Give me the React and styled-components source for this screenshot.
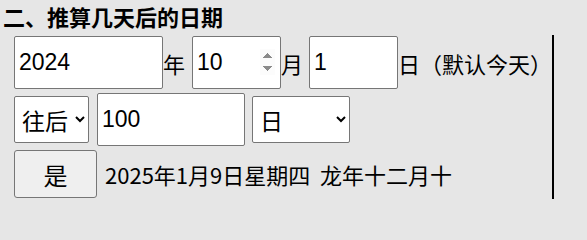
import React, { useState } from "react";
import styled, { createGlobalStyle } from "styled-components";

const GlobalStyle = createGlobalStyle`
  html, body {
    margin: 0;
    background: #e6e6e6;
  }
  body {
    font-family: "Noto Sans CJK SC", "Liberation Sans", sans-serif;
    color: #000;
  }
  input[type="number"]::-webkit-inner-spin-button {
    opacity: 1;
  }
`;

const Page = styled.div`
  padding: 5px 0 0 3px;
`;

const Title = styled.h3`
  margin: 0;
  font-size: 22px;
  line-height: 22px;
  font-weight: 700;
`;

const Form = styled.div`
  margin: 8px 0 0 11px;
  width: 540px;
  box-sizing: border-box;
  padding: 1px 0;
  border-right: 2px solid #000;
  display: flex;
  flex-direction: column;
  gap: 4px;
`;

const Row = styled.div`
  display: flex;
  align-items: center;
  white-space: nowrap;
  font-size: 22px;
`;

const Field = styled.input`
  box-sizing: border-box;
  width: ${(p) => p.$w}px;
  height: 53px;
  margin-right: ${(p) => p.$gap || 0}px;
  padding: 12px 5px 12px 4px;
  border: 1px solid #767676;
  border-radius: 2px;
  background: #fff;
  font-family: "Liberation Sans", Arial, sans-serif;
  font-size: 23px;
  color: #000;
  outline: none;
`;

const Unit = styled.span`
  margin-right: ${(p) => p.$gap || 0}px;
`;

const Picker = styled.select`
  box-sizing: border-box;
  width: ${(p) => p.$w}px;
  height: 47px;
  margin-right: ${(p) => p.$gap || 0}px;
  padding: 0 0 0 3px;
  border: 1px solid #767676;
  border-radius: 2px;
  background: #fff;
  font-family: "Noto Sans CJK SC", sans-serif;
  font-size: 23px;
  color: #000;
`;

const Button = styled.button`
  box-sizing: border-box;
  width: 83px;
  height: 48px;
  margin-right: 8px;
  border: 1px solid #767676;
  border-radius: 3px;
  background: #efefef;
  font-family: "Noto Sans CJK SC", sans-serif;
  font-size: 24px;
  color: #000;
`;

export default function App() {
  const [year, setYear] = useState("2024");
  const [month, setMonth] = useState("10");
  const [day, setDay] = useState("1");
  const [count, setCount] = useState("100");

  return (
    <Page>
      <GlobalStyle />
      <Title>二、推算几天后的日期</Title>
      <Form>
        <Row>
          <Field $w={149} value={year} onChange={(e) => setYear(e.target.value)} />
          <Unit $gap={7}>年</Unit>
          <Field
            type="number"
            $w={89}
            value={month}
            onChange={(e) => setMonth(e.target.value)}
          />
          <Unit $gap={6}>月</Unit>
          <Field $w={89} value={day} onChange={(e) => setDay(e.target.value)} />
          <Unit>日（默认今天）</Unit>
        </Row>
        <Row>
          <Picker $w={75} $gap={8} defaultValue="after">
            <option value="after">往后</option>
            <option value="before">往前</option>
          </Picker>
          <Field $w={148} $gap={7} value={count} onChange={(e) => setCount(e.target.value)} />
          <Picker $w={98} defaultValue="d">
            <option value="d">日</option>
            <option value="w">周</option>
            <option value="m">月</option>
            <option value="y">年</option>
          </Picker>
        </Row>
        <Row>
          <Button>是</Button>
          <span>2025年1月9日星期四&nbsp; 龙年十二月十</span>
        </Row>
      </Form>
    </Page>
  );
}
